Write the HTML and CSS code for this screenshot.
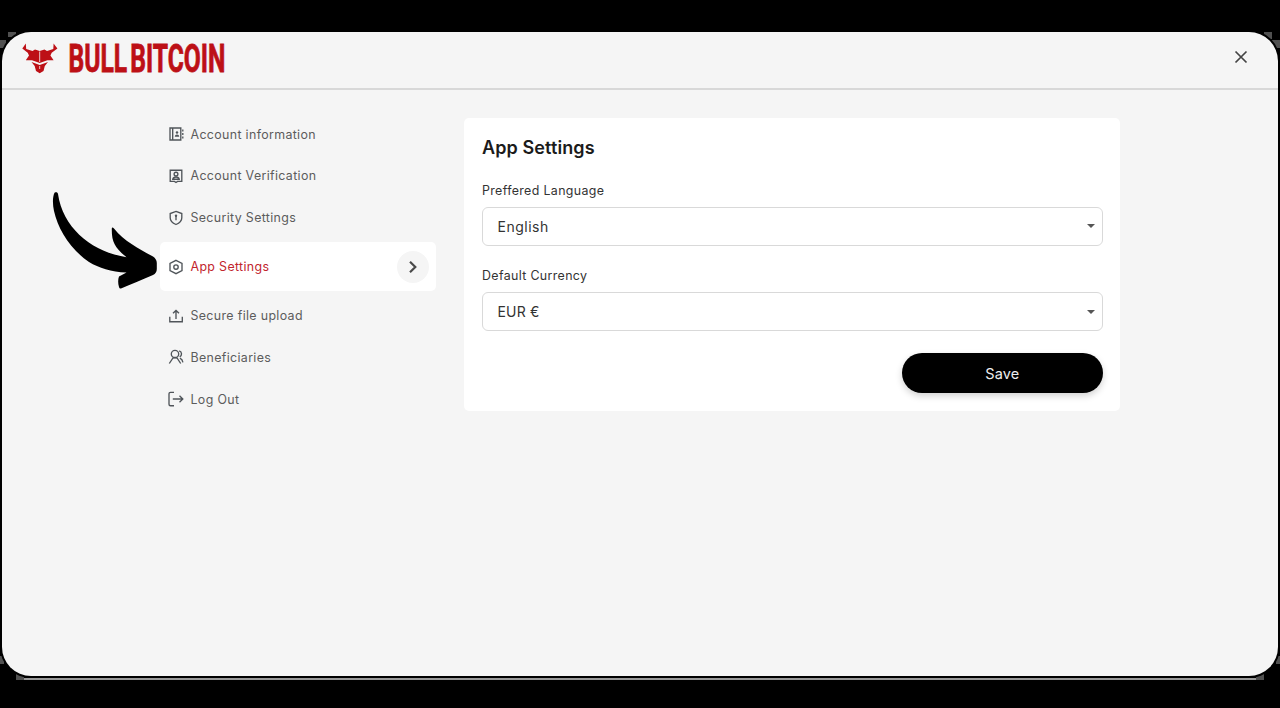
FILE: index.html
```html
<!DOCTYPE html>
<html lang="en">
<head>
<meta charset="utf-8">
<title>App Settings</title>
<link rel="stylesheet" href="styles.css">
</head>
<body>
<svg class="frame-edge" viewBox="0 0 1280 708" aria-hidden="true">
  <path d="M16 678H1264V680H16Z" fill="#999"/>
  <path d="M8 32h8v5h-8zM0 40h6v8H0zM1264 32h8v7h-8zM1272 40h8v8h-8zM16 674h8v6h-8zM1256 674h8v6h-8zM0 656h4v8H0zM1276 656h4v8h-4z" fill="#505050"/>
</svg>
<div class="window">
  <header class="header">
    <svg class="logo" width="215" height="50" viewBox="0 0 215 50" role="img" aria-label="Bull Bitcoin">
      <g class="logo-ink">
        <path d="M5.800 7.500L2.300 12.500L7.700 16.800L9 19.500L5.800 24.300L12 24.300L19.700 27L27.400 24.300L33.600 24.300L30.400 19.500L31.700 16.800L37.400 12.500L33.600 7.500L33.300 13L27 15L24.500 13.500L19.700 15L15 13.500L12.500 15L6.200 13Z"/>
        <path d="M11.500 26L19.700 29L28 26L24.800 30L23.500 35L19.700 37.300L16 35L14.700 30Z"/>
        <path class="logo-cut" d="M19.700 15.500V26M19.700 30V33"/>
        <text class="logo-text" x="48.500" y="35.500" textLength="157" lengthAdjust="spacingAndGlyphs">BULL BITCOIN</text>
      </g>
    </svg>
    <button class="close" aria-label="Close"><svg width="14" height="14" viewBox="0 0 14 14"><path d="M1.500 1.500l11 11M12.500 1.500l-11 11"/></svg></button>
  </header>
  <main class="content">
    <nav class="nav">
      <a class="item"><svg class="icon" viewBox="0 0 16 16"><path d="M2 2h10.800v12H2zM4.700 2v12M14.800 3.500v2M14.800 7v2M14.800 10.500v2"/><circle class="solid" cx="9" cy="6.500" r="1.200"/><path class="solid" d="M6.800 10.700c0-3 4.400-3 4.400 0z"/></svg><span>Account information</span></a>
      <a class="item"><svg class="icon" viewBox="0 0 16 16"><path d="M2.200 2.200h11.600v11.200H9.500L8 14.500l-1.500-1.100H2.200z"/><circle cx="8" cy="6.100" r="1.900"/><path d="M4.800 11.200c.6-3 5.800-3 6.400 0z"/></svg><span>Account Verification</span></a>
      <a class="item"><svg class="icon" viewBox="0 0 16 16"><path d="M8 1.400l5.800 2.100v4.200c0 3.400-2.400 5.400-5.800 6.800-3.400-1.400-5.800-3.400-5.800-6.800V3.500z"/><path d="M8 6v4.300"/><circle class="solid" cx="8" cy="5.800" r="1.200"/></svg><span>Security Settings</span></a>
      <a class="item active"><svg class="icon" viewBox="0 0 16 16"><path d="M8 1.300l6 3v7.400l-6 3-6-3V4.300z"/><circle cx="8" cy="8" r="2.200"/></svg><span class="label-active">App Settings</span>
        <span class="go"><svg width="10" height="14" viewBox="0 0 10 14"><path d="M2 1.800l5.300 5.200L2 12.200"/></svg></span></a>
      <a class="item"><svg class="icon" viewBox="0 0 16 16"><path d="M1.800 8.800v4.900h12.500V8.800M8 11V3M5 5.300L8 2.400l3 2.900"/></svg><span>Secure file upload</span></a>
      <a class="item"><svg class="icon" viewBox="0 0 16 16"><circle cx="7" cy="5" r="3.700"/><path d="M1.300 14.500L4.800 9.200Q7 7.900 9.200 9.200L12.700 14.500M11.200 1.800c3 1 3 4.700.5 6.100M11.900 9.200c1.900.8 2.700 2.200 3 4.200"/></svg><span>Beneficiaries</span></a>
      <a class="item"><svg class="icon" viewBox="0 0 16 16"><path d="M6 1.300H2.500Q1 1.300 1 2.800v10.400q0 1.500 1.500 1.500H6M4.800 8h9.900M11.500 4.800L14.800 8l-3.300 3.200"/></svg><span>Log Out</span></a>
    </nav>
    <section class="card">
      <h1 class="title">App Settings</h1>
      <div class="label">Preffered Language</div>
      <div class="select"><span>English</span><i class="caret"></i></div>
      <div class="label">Default Currency</div>
      <div class="select"><span class="currency">EUR €</span><i class="caret"></i></div>
      <button class="save">Save</button>
    </section>
  </main>
</div>
<svg class="pointer" viewBox="0 0 130 120" aria-hidden="true"><path d="M14.500 12.700C16 12 17.700 12 18 14C23 49 53 72 86.500 77.200C75 68 71.500 62 71.800 48.500Q72 46.500 74 48.500C84 61 99 69 113 76.500Q116.700 79 116.800 83V89Q116.800 93 113 95C102 100 91 104 81 108.500Q79.500 109 79 107C77.800 103 78 99 79 96.500L86.500 92.500C71 92 59 88 49 82C30 69 18 49 14 31C12.500 24 12.500 17 14.500 12.700Z"/></svg>
</body>
</html>
```
FILE: styles.css
```css
* { box-sizing: border-box; }
body { margin: 0; height: 708px; overflow: hidden; background: #000; padding: 32px 2px; font-family: Inter, "Liberation Sans", sans-serif; position: relative; }
.frame-edge { position: absolute; inset: 0; width: 1280px; height: 708px; }
.window { position: relative; height: 644px; border-radius: 29px; background: #f5f5f5; overflow: hidden; box-shadow: 0 0 0 2px #000; }
.header { height: 58px; display: flex; justify-content: space-between; align-items: flex-start; border-bottom: 2px solid #d8d8d8; padding: 4px 30px 0 18px; }
.logo { display: block; overflow: visible; }
.logo-ink { fill: #bd1016; }
.logo-cut { fill: none; stroke: #f5f5f5; stroke-width: .8; }
.logo-text { font: 700 38.500px Roboto, sans-serif; word-spacing: -5px; stroke: #bd1016; stroke-width: .8px; }
.close { border: 0; background: none; padding: 0; margin-top: 14px; height: 14px; }
.close svg { display: block; fill: none; stroke: #444; stroke-width: 1.700; }
.content { display: flex; align-items: flex-start; padding: 23px 0 0 158px; gap: 28px; }
.nav { width: 276px; display: flex; flex-direction: column; padding-top: .3px; }
.item { height: 41.700px; display: flex; align-items: center; padding: 0 7px 0 8px; gap: 6.500px; color: #5c5c5c; font-size: 12.400px; letter-spacing: .35px; white-space: nowrap; }
.icon { width: 16px; height: 16px; flex: none; fill: none; stroke: #50555a; stroke-width: 1.350; overflow: visible; }
.icon .solid { fill: #50555a; stroke: none; }
.active { height: 48.500px; margin: 4px 0; background: #fff; border-radius: 5px; }
.label-active { color: #c2252d; }
.go { width: 32px; height: 32px; border-radius: 50%; background: #f5f5f5; margin-left: auto; display: flex; align-items: center; justify-content: center; }
.go svg { fill: none; stroke: #4a4a4a; stroke-width: 2.200; }
.card { width: 656px; height: 293px; margin-top: 5px; background: #fff; border-radius: 5px; padding: 18px 17.500px 0 18px; display: flex; flex-direction: column; }
.title { margin: 0; font-size: 18px; font-weight: 600; line-height: 24px; color: #1b1b1b; letter-spacing: .1px; }
.label { font-size: 12.400px; line-height: 16px; letter-spacing: .36px; color: #333; margin-top: 22.500px; margin-bottom: 8px; }
.select { height: 39px; border: 1px solid #d9d9d9; border-radius: 6px; display: flex; align-items: center; justify-content: space-between; padding: 0 6.500px 0 14.500px; font-size: 14px; color: #333; letter-spacing: .5px; flex: none; }
.currency { letter-spacing: .15px; }
.caret { border: 4.500px solid transparent; border-top-color: #555; border-bottom: 0; }
.save { align-self: flex-end; width: 200.500px; height: 40px; margin-top: 22px; border: 0; border-radius: 20px; background: #000; color: #eee; font: 400 14.500px Inter, sans-serif; letter-spacing: .1px; box-shadow: 0 3px 7px rgba(0,0,0,.18); flex: none; }
.pointer { position: absolute; left: 40px; top: 180px; width: 130px; height: 120px; }
```
